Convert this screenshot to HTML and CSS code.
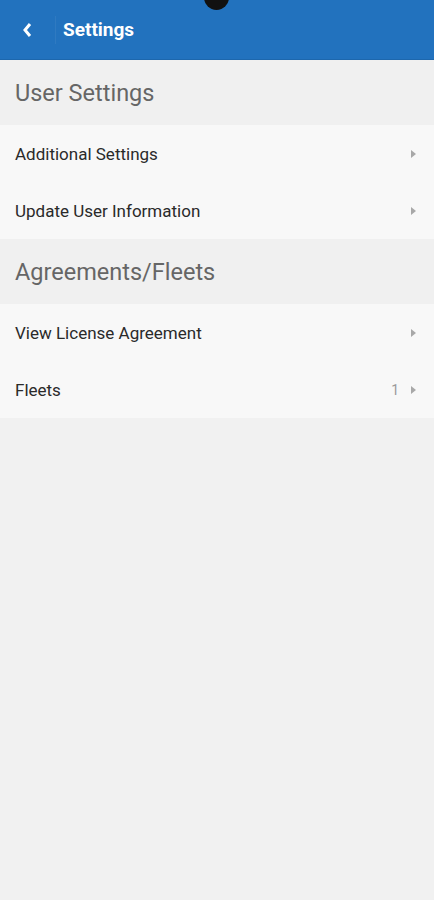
FILE: index.html
```html
<!DOCTYPE html>
<html>
<head>
<meta charset="utf-8">
<link rel="stylesheet" href="styles.css">
</head>
<body>
<div class="camera"></div>
<header class="topbar">
  <button class="back" aria-label="Back">
    <svg width="12" height="16" viewBox="0 0 12 16"><path d="M8 2 L3 8 L8 14" fill="none" stroke="#fff" stroke-width="3" stroke-linejoin="miter"/></svg>
  </button>
  <span class="sep"></span>
  <h1 class="title">Settings</h1>
</header>
<main>
  <section class="group">
    <h2 class="group-title">User Settings</h2>
    <div class="row"><span class="label">Additional Settings</span><span class="chev"></span></div>
    <div class="row"><span class="label">Update User Information</span><span class="chev"></span></div>
  </section>
  <section class="group">
    <h2 class="group-title">Agreements/Fleets</h2>
    <div class="row"><span class="label">View License Agreement</span><span class="chev"></span></div>
    <div class="row"><span class="label">Fleets</span><span class="count">1</span><span class="chev"></span></div>
  </section>
</main>
</body>
</html>
```
FILE: styles.css
```css
html, body { margin: 0; padding: 0; }
body {
  background: #f1f1f1;
  font-family: Roboto, "Noto Sans", sans-serif;
  width: 434px;
  height: 900px;
  overflow: hidden;
  position: relative;
}
.camera {
  position: absolute;
  left: 204px;
  top: -15px;
  width: 25px;
  height: 25px;
  border-radius: 50%;
  background: #111;
  z-index: 2;
}
.topbar {
  height: 59px;
  background: #2272be;
  border-bottom: 1px solid #1d67ad;
  display: flex;
  align-items: center;
  position: relative;
  z-index: 1;
}
.back {
  border: 0;
  background: none;
  padding: 0;
  margin-left: 22px;
  width: 12px;
  height: 16px;
  display: flex;
  align-items: center;
  justify-content: center;
}
.sep {
  width: 1px;
  height: 28px;
  background: rgba(255,255,255,0.06);
  margin-left: 21px;
}
.title {
  margin: 0 0 0 7px;
  color: #fff;
  font-size: 19px;
  font-weight: 700;
}
.group-title {
  margin: 0;
  height: 65px;
  display: flex;
  align-items: center;
  padding-left: 15px;
  font-size: 23.5px;
  font-weight: 400;
  color: #666;
  background: #f0f0f0;
}
.row {
  height: 57px;
  background: #f8f8f8;
  display: flex;
  align-items: center;
  padding: 0 18px 0 15px;
}
.label {
  flex: 1;
  font-size: 17px;
  color: #2a2a2a;
}
.count {
  font-size: 14px;
  color: #9a9a9a;
  margin-right: 12px;
}
.chev {
  width: 0;
  height: 0;
  border-top: 4.5px solid transparent;
  border-bottom: 4.5px solid transparent;
  border-left: 5px solid #a8a8a8;
}
```
